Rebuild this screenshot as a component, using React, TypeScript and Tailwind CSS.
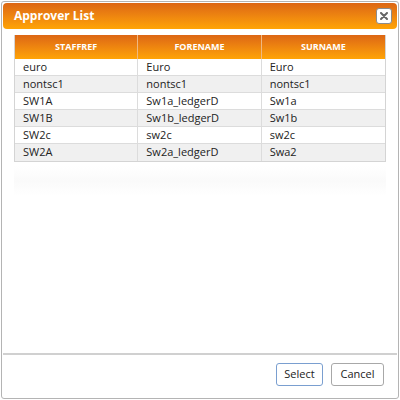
const rows = [
  ["euro", "Euro", "Euro"],
  ["nontsc1", "nontsc1", "nontsc1"],
  ["SW1A", "Sw1a_ledgerD", "Sw1a"],
  ["SW1B", "Sw1b_ledgerD", "Sw1b"],
  ["SW2c", "sw2c", "sw2c"],
  ["SW2A", "Sw2a_ledgerD", "Swa2"],
];

export default function App() {
  return (
    <div className="w-[400px] h-[400px] p-[1px] bg-white" style={{ fontFamily: '"Open Sans", "DejaVu Sans", sans-serif' }}>
      <div className="h-full flex flex-col border border-[#b4b4b4] rounded-[3px] p-[1px]">
        {/* Title bar */}
        <div className="h-[26px] flex items-center justify-between rounded-[4px] bg-gradient-to-b from-[#dc6614] to-[#ffa405] pl-[11px] pr-[5px]">
          <span className="text-white font-bold text-[12px]">Approver List</span>
          <button className="w-[16px] h-[16px] flex items-center justify-center bg-white border border-[#8c8c8c] rounded-[3px]">
            <svg width="8" height="8" viewBox="0 0 8 8">
              <path d="M1 1L7 7M7 1L1 7" stroke="#666" strokeWidth="2" strokeLinecap="round" />
            </svg>
          </button>
        </div>

        {/* Table */}
        <div className="flex-1 pt-[6px] px-[11px]">
          <div className="border border-[#d4d4d4] border-t-0">
            <div className="grid grid-cols-3 h-[24px] bg-gradient-to-b from-[#dc6614] to-[#ffa405]">
              {["STAFFREF", "FORENAME", "SURNAME"].map((h, i) => (
                <div
                  key={h}
                  className={`flex items-center justify-center text-white font-bold text-[9px] ${i < 2 ? "border-r border-[#f0b880]" : ""}`}
                >
                  {h}
                </div>
              ))}
            </div>
            {rows.map((r, idx) => (
              <div
                key={idx}
                className={`grid grid-cols-3 h-[17px] border-b border-[#dcdcdc] last:border-b-0 ${idx % 2 ? "bg-[#f0f0f0]" : "bg-white"}`}
              >
                {r.map((c, i) => (
                  <div
                    key={i}
                    className={`flex items-center pl-[8px] text-[11px] text-[#222] ${i < 2 ? "border-r border-[#dcdcdc]" : ""}`}
                  >
                    {c}
                  </div>
                ))}
              </div>
            ))}
          </div>
          <div className="h-[30px] mt-[4px] bg-gradient-to-b from-white via-[#fafafa] to-white" />
        </div>

        {/* Footer */}
        <div className="h-[2px] bg-[#d0d0d0]" />
        <div className="h-[42px] flex items-start justify-end gap-[8px] pt-[8px] pr-[13px]">
          <button className="w-[47px] h-[23px] bg-white border border-[#7a9fd0] rounded-[3px] text-[11px] text-[#222]">
            Select
          </button>
          <button className="w-[53px] h-[23px] bg-white border border-[#a8a8a8] rounded-[3px] text-[11px] text-[#222]">
            Cancel
          </button>
        </div>
      </div>
    </div>
  );
}
